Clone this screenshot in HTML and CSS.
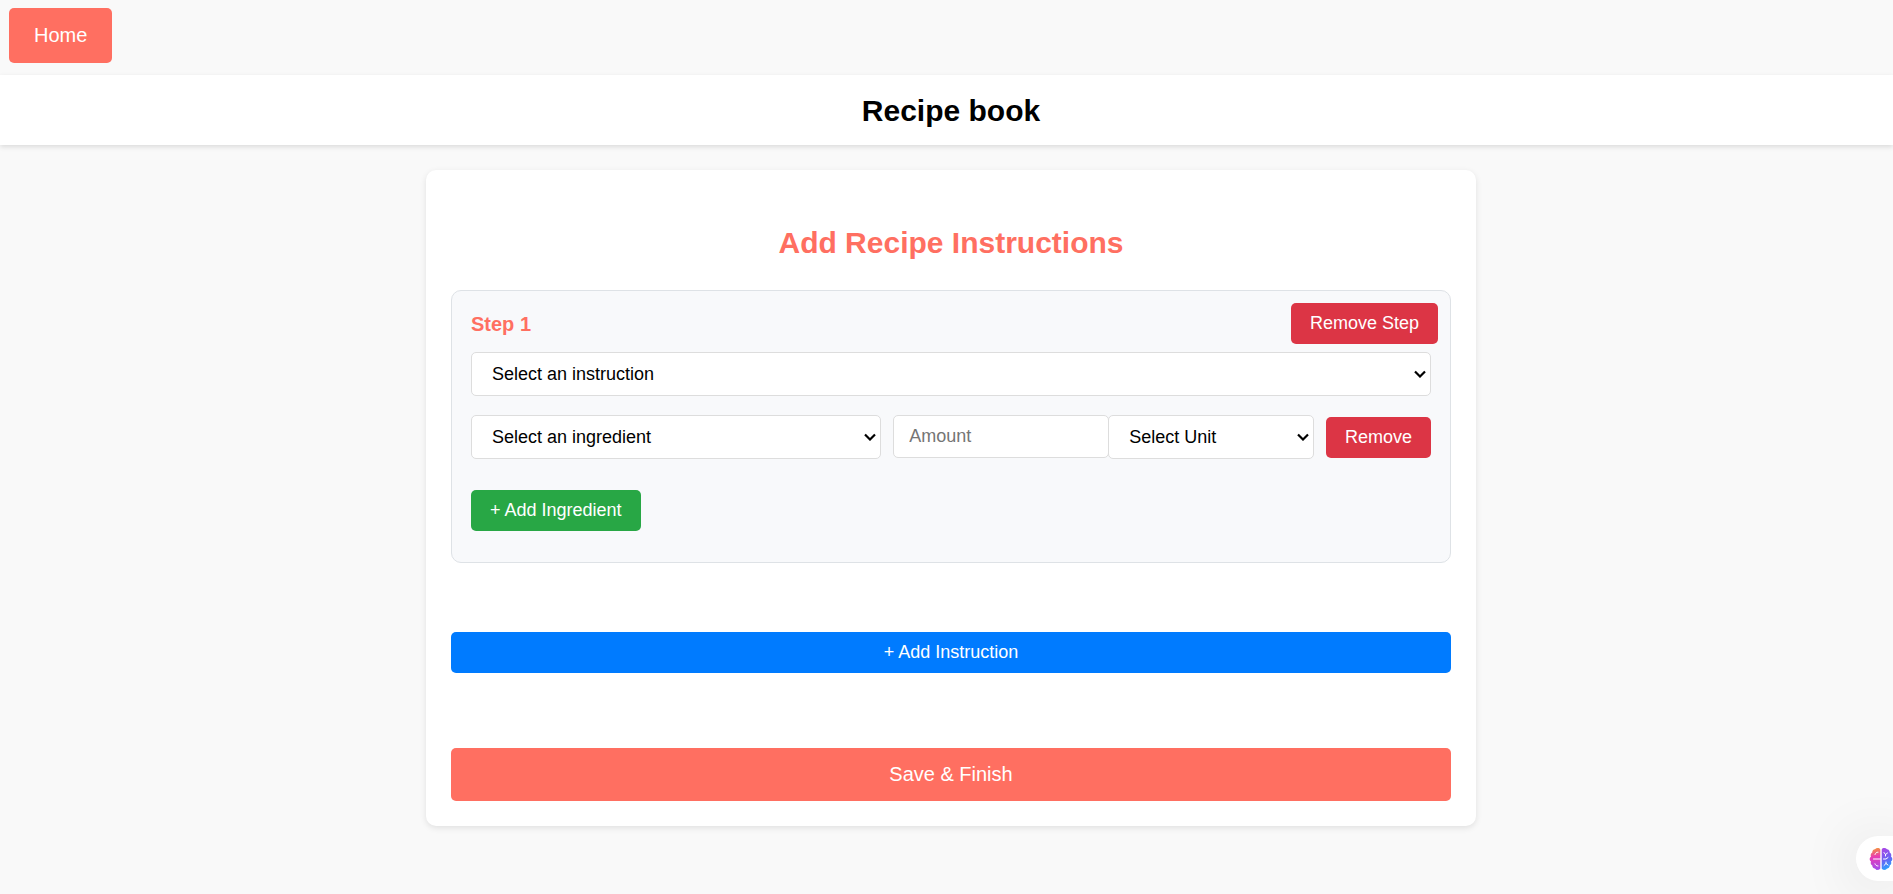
FILE: index.html
```html
<!DOCTYPE html>
<html lang="en">
<head>
<meta charset="utf-8">
<title>Recipe book</title>
<link rel="stylesheet" href="styles.css">
</head>
<body>
<nav class="nav"><a class="btn btn-large" href="#">Home</a></nav>
<header class="site-header"><h1>Recipe book</h1></header>
<main class="page">
  <form class="card">
    <h2>Add Recipe Instructions</h2>
    <section class="step">
      <div class="step-head">
        <h3>Step 1</h3>
        <button type="button" class="btn btn-danger">Remove Step</button>
      </div>
      <div class="step-body">
        <select class="field" aria-label="Instruction"><option>Select an instruction</option></select>
        <div class="ingredient">
          <select class="field ingredient-name" aria-label="Ingredient"><option>Select an ingredient</option></select>
          <div class="measure">
            <input class="field amount" type="text" placeholder="Amount" aria-label="Amount">
            <select class="field unit" aria-label="Unit"><option>Select Unit</option></select>
          </div>
          <button type="button" class="btn btn-danger">Remove</button>
        </div>
        <button type="button" class="btn btn-success">+ Add Ingredient</button>
      </div>
    </section>
    <button type="button" class="btn btn-primary">+ Add Instruction</button>
    <button type="submit" class="btn btn-large btn-save">Save &amp; Finish</button>
  </form>
</main>
<button type="button" class="assistant" aria-label="Open assistant">
  <svg width="24" height="24" viewBox="0 0 24 24" fill="none">
    <defs>
      <linearGradient id="left" x1="6" y1="1" x2="9" y2="23" gradientUnits="userSpaceOnUse"><stop stop-color="#f5923e"/><stop offset=".4" stop-color="#e83bb5"/><stop offset="1" stop-color="#a04df0"/></linearGradient>
      <linearGradient id="right" x1="13" y1="3" x2="22" y2="21" gradientUnits="userSpaceOnUse"><stop stop-color="#a548e6"/><stop offset=".5" stop-color="#6a62f4"/><stop offset="1" stop-color="#22a6ff"/></linearGradient>
    </defs>
    <path fill="url(#left)" d="M11.3 2.5C10.500 .8 7.500 .6 6 2.200 4.300 2.300 3.200 3.800 3.300 5.400 1.800 6.300 1.300 8 2 9.500 .2 10.800 .2 13.300 2 14.500 1.300 16.200 1.900 17.800 3.300 18.600 3.300 20.300 4.500 21.600 6.200 21.700 7.500 23.400 10.500 23.200 11.300 21.500Z"/>
    <path fill="url(#right)" d="M12.700 2.500C13.500 .8 16.500 .6 18 2.200 19.700 2.300 20.800 3.800 20.700 5.400 22.200 6.300 22.700 8 22 9.500 23.800 10.800 23.800 13.300 22 14.500 22.700 16.200 22.100 17.800 20.700 18.600 20.700 20.300 19.500 21.600 17.800 21.700 16.500 23.400 13.500 23.200 12.700 21.500Z"/>
    <path stroke="#fff" stroke-width="1" stroke-linecap="round" d="M11.300 12H4.500M6 7.500C6.500 5.800 7.500 5.200 9 5.200M9 19C7.500 19 6.500 18.300 6 16.800M15 5.500 16.500 7.500 18.500 6M16.500 7.500V9M14.500 12H17L19 10.500M15 18.500 17 16.500 19 18M17 16.500V15"/>
  </svg>
</button>
</body>
</html>
```
FILE: styles.css
```css
* { box-sizing: border-box; }
html { overflow-x: hidden; }
body {
  margin: 0;
  background: #f9f9f9;
  color: #000;
  font-family: "Liberation Sans", Arial, sans-serif;
  font-size: 18px;
}
h1, h2, h3 { margin: 0; }
.nav { display: flex; padding: 8px 9px 12px; }
.site-header {
  padding: 19px 0 17px 9px;
  background: #fff;
  box-shadow: 0 2px 5px rgba(0, 0, 0, .12);
  text-align: center;
}
h1, h2 { font-size: 30px; line-height: 34px; }
.page { padding: 25px 0 25px 9px; }
.card {
  display: flex;
  flex-direction: column;
  max-width: 1050px;
  margin: 0 auto;
  padding: 56px 25px 25px;
  border-radius: 10px;
  background: #fff;
  box-shadow: 0 2px 6px rgba(0, 0, 0, .1);
}
h2 { margin-bottom: 30px; color: #ff6f61; text-align: center; }
.btn {
  padding: 10px 19px;
  border: 0;
  border-radius: 5px;
  color: #fff;
  font-family: inherit;
  font-size: 18px;
  line-height: 21px;
  text-align: center;
  text-decoration: none;
  cursor: pointer;
}
.btn-large { padding: 16px 25px; background: #ff6f61; font-size: 20px; line-height: 23px; }
.btn-danger { background: #dc3545; }
.btn-success { background: #28a745; }
.btn-primary { margin: 69px 0 75px; background: #007bff; }
.btn-save { padding: 15px 25px; }
.step {
  padding: 12px 12px 31px 19px;
  border: 1px solid #dee2e6;
  border-radius: 10px;
  background: #f8f9fb;
}
.step-head { display: flex; justify-content: space-between; align-items: center; }
h3 { color: #ff6f61; font-size: 20px; line-height: 24px; }
.step-body { margin: 8px 7px 0 0; }
.field {
  width: 100%;
  height: 44px;
  border: 1px solid #ddd;
  border-radius: 5px;
  background-color: #fff;
  color: #000;
  font-family: inherit;
  font-size: 18px;
}
select.field {
  appearance: none;
  padding: 0 0 0 20px;
  background-image: url("data:image/svg+xml,%3Csvg xmlns='http://www.w3.org/2000/svg' width='12' height='8'%3E%3Cpath d='M1 1.500 6 6.500 11 1.500' fill='none' stroke='%23000' stroke-width='2.200'/%3E%3C/svg%3E");
  background-repeat: no-repeat;
  background-position: right 4px center;
}
.ingredient { display: flex; align-items: center; gap: 12px; margin: 19px 0 31px; }
.ingredient-name { flex: 12; min-width: 0; }
.measure { display: flex; flex: 13; min-width: 0; }
.amount { flex: 1; min-width: 0; height: 43px; padding: 0 15px; }
.amount::placeholder { color: #757575; }
.unit { flex: 1; min-width: 0; margin-left: -1px; }
.assistant {
  position: fixed;
  right: 0;
  bottom: 13px;
  padding: 11px 0 10px 13px;
  width: 37px;
  height: 45px;
  border: 0;
  border-radius: 23px 0 0 23px;
  background: #fff;
  box-shadow: 0 4px 60px rgba(0, 0, 0, .14);
}
.assistant svg { display: block; }
```
